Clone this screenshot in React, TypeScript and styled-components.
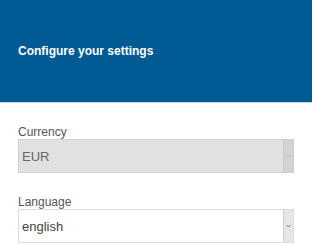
import React from 'react';
import styled, { createGlobalStyle } from 'styled-components';

const GlobalStyle = createGlobalStyle`
  html, body {
    margin: 0;
    padding: 0;
    background: #fff;
    font-family: 'Liberation Sans', Arial, sans-serif;
  }
`;

// Header

const Header = styled.header`
  height: 103px;
  background: #005a94;
  border-bottom: 1px solid #c9d3db;
  display: flex;
  align-items: center;
  padding: 0 18px;
  box-sizing: border-box;
`;

const Title = styled.h1`
  margin: -1px 0 0;
  font-size: 12px;
  font-weight: bold;
  color: #fff;
`;

// Form

const Form = styled.div`
  padding: 22px 18px 0;
  display: flex;
  flex-direction: column;
  gap: 22px;
`;

const Field = styled.div`
  display: flex;
  flex-direction: column;
`;

const Label = styled.label`
  font-size: 12px;
  color: #555;
  line-height: 14px;
`;

type SelectProps = { $disabled?: boolean };

const SelectBox = styled.div<SelectProps>`
  height: 34px;
  box-sizing: border-box;
  border: 1px solid ${p => (p.$disabled ? '#cfcfcf' : '#dcdcdc')};
  background: ${p => (p.$disabled ? '#e1e1e1' : '#fff')};
  display: flex;
  align-items: stretch;
`;

const Value = styled.span<SelectProps>`
  flex: 1;
  display: flex;
  align-items: center;
  padding-left: 3px;
  font-size: 13px;
  color: ${p => (p.$disabled ? '#666' : '#444')};
`;

const Arrow = styled.span<SelectProps>`
  width: 9px;
  background: ${p => (p.$disabled ? '#d4d4d4' : '#e6e6e6')};
  border-left: 1px solid ${p => (p.$disabled ? '#c8c8c8' : '#cfcfcf')};
  display: flex;
  align-items: center;
  justify-content: center;
  svg {
    opacity: ${p => (p.$disabled ? 0.3 : 1)};
  }
`;

const Select: React.FC<{ value: string; disabled?: boolean }> = ({ value, disabled }) => (
  <SelectBox $disabled={disabled}>
    <Value $disabled={disabled}>{value}</Value>
    <Arrow $disabled={disabled}>
      <svg width="5" height="4" viewBox="0 0 5 4">
        <path d="M0.5 1 L2.5 3 L4.5 1" fill="none" stroke="#777" strokeWidth="1" />
      </svg>
    </Arrow>
  </SelectBox>
);

export default function App() {
  return (
    <>
      <GlobalStyle />
      <Header>
        <Title>Configure your settings</Title>
      </Header>
      <Form>
        <Field>
          <Label>Currency</Label>
          <Select value="EUR" disabled />
        </Field>
        <Field>
          <Label>Language</Label>
          <Select value="english" />
        </Field>
      </Form>
    </>
  );
}
